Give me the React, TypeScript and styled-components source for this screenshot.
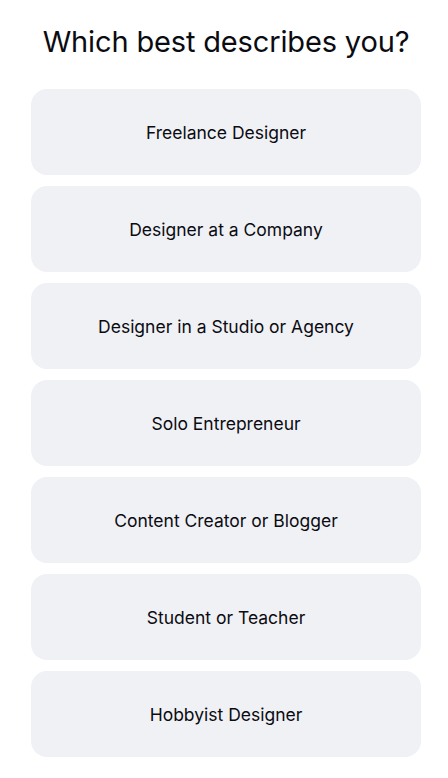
import React, { FC } from 'react';
import styled, { createGlobalStyle } from 'styled-components';

const GlobalStyle = createGlobalStyle`
  html, body {
    margin: 0;
    padding: 0;
    background: #ffffff;
  }
  body {
    font-family: Inter, "Noto Sans", sans-serif;
    color: #0b0b12;
  }
`;

const Page = styled.div`
  display: flex;
  flex-direction: column;
  align-items: center;
  padding: 22px 27px 20px 31px;
`;

const Title = styled.h1`
  margin: 0 0 27px;
  font-size: 29px;
  font-weight: 400;
  line-height: 40px;
  letter-spacing: -0.15px;
  text-align: center;
  color: #0b0b12;
`;

const Options = styled.div`
  display: flex;
  flex-direction: column;
  gap: 11px;
  width: 100%;
`;

const Option = styled.button`
  display: flex;
  align-items: center;
  justify-content: center;
  height: 86px;
  width: 100%;
  border: none;
  border-radius: 16px;
  background: #f0f1f5;
  font-family: Inter, "Noto Sans", sans-serif;
  font-size: 17.5px;
  color: #0b0b12;
  cursor: pointer;
`;

const options = [
  'Freelance Designer',
  'Designer at a Company',
  'Designer in a Studio or Agency',
  'Solo Entrepreneur',
  'Content Creator or Blogger',
  'Student or Teacher',
  'Hobbyist Designer',
];

const App: FC = () => {
  return (
    <>
      <GlobalStyle />
      <Page>
        <Title>Which best describes you?</Title>
        <Options>
          {options.map((label) => (
            <Option key={label}>{label}</Option>
          ))}
        </Options>
      </Page>
    </>
  );
};

export default App;
